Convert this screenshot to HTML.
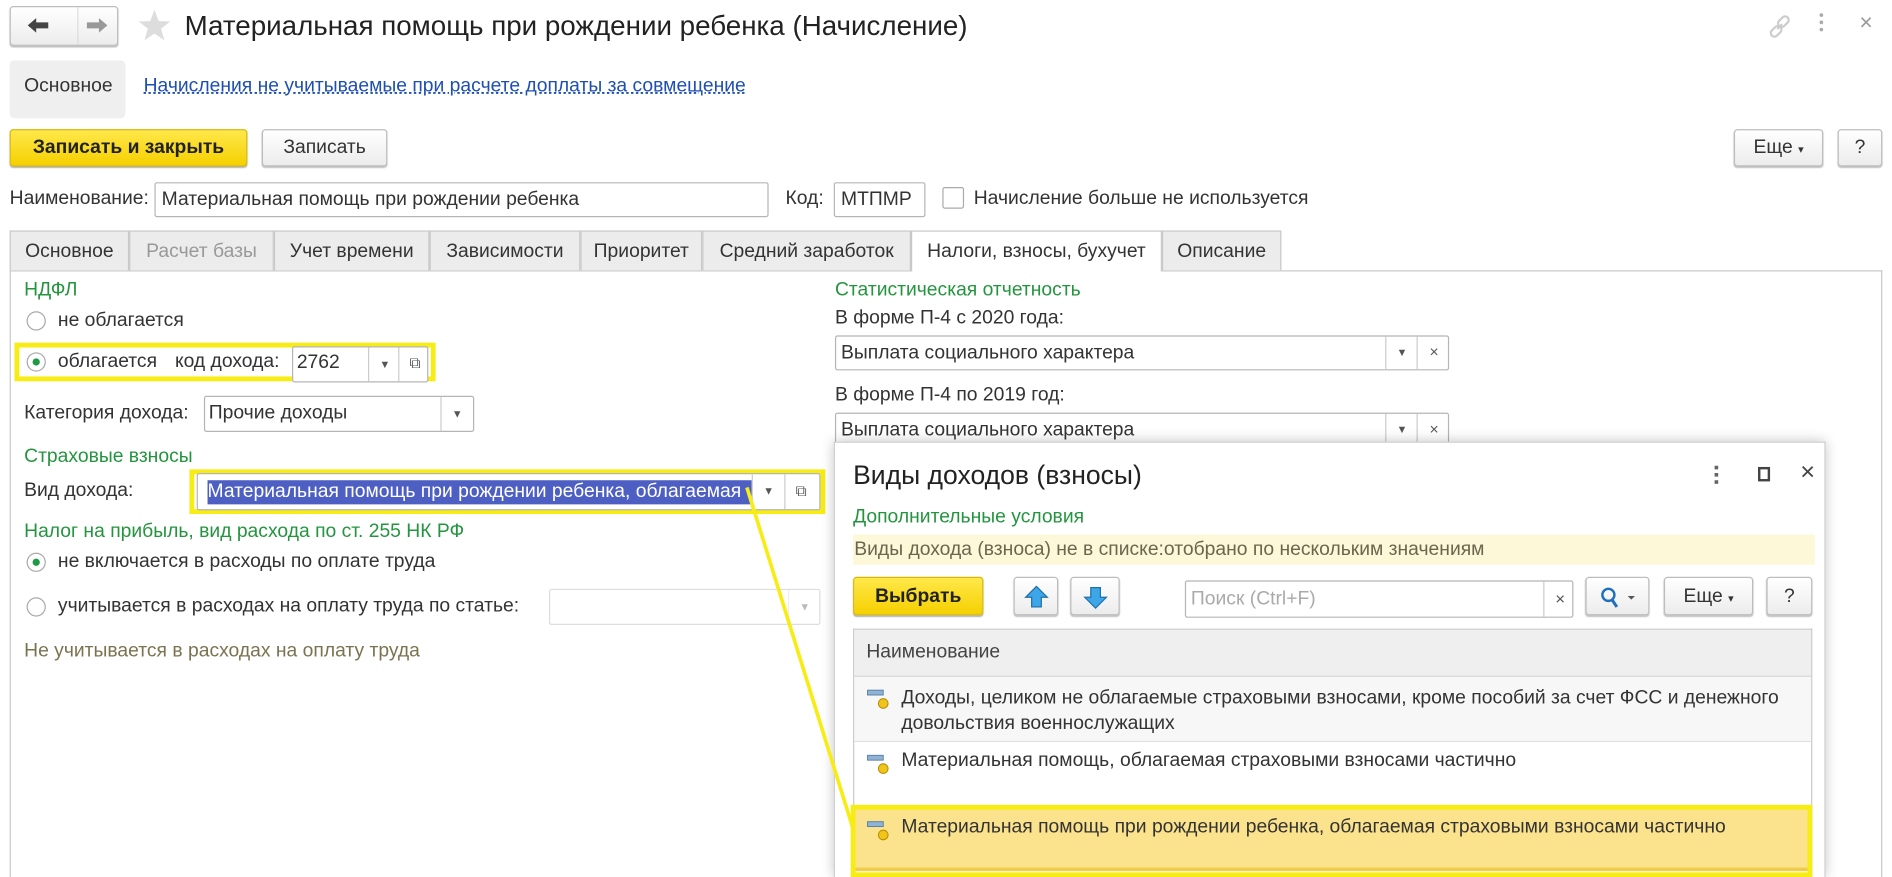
<!DOCTYPE html>
<html><head><meta charset="utf-8"><style>
html,body{margin:0;padding:0;background:#fff;overflow:hidden;width:1892px;height:877px}
#w{position:absolute;left:0;top:0;width:1568px;height:727px;overflow:hidden;transform:scale(1.2066);transform-origin:0 0;font-family:"Liberation Sans",sans-serif;font-size:16px;color:#333}
.a{position:absolute;white-space:nowrap}
.btn{position:absolute;box-sizing:border-box;border:1px solid #bdbdbd;border-radius:3px;background:linear-gradient(#fff,#ececec);box-shadow:0 1px 1px rgba(0,0,0,.25);text-align:center;color:#333}
.ybtn{position:absolute;box-sizing:border-box;border:1px solid #d8b800;border-radius:3px;background:linear-gradient(#ffe84a,#f5d000);box-shadow:0 1px 1px rgba(0,0,0,.3);text-align:center;font-weight:bold;color:#222}
.inp{position:absolute;box-sizing:border-box;border:1px solid #b5b5b5;border-radius:2px;background:#fff;padding-left:5px;color:#333}
.g{color:#24953f}
.tab{position:absolute;top:191px;height:33px;box-sizing:border-box;border:1px solid #c8c8c8;border-bottom:none;background:#ececec;text-align:center;line-height:33px}
.rad{position:absolute;width:16px;height:16px;border:1px solid #a9a9a9;border-radius:50%;box-sizing:border-box;background:#fff}
.rad.on::after{content:"";position:absolute;left:4px;top:4px;width:6px;height:6px;border-radius:50%;background:#1e9a45}
.dd{position:absolute;top:0;bottom:0;border-left:1px solid #ccc;width:26px;font-size:9px;text-align:center;color:#555}
.yb{position:absolute;box-sizing:border-box;border:4px solid #f7ec13}
.ic{position:absolute}
</style></head><body><div id="w">
<div class="btn" style="left:8px;top:5px;width:90px;height:33px;border-radius:3px"></div>
<div style="position:absolute;left:64px;top:6px;width:1px;height:31px;background:#ddd"></div>
<svg class="ic" style="left:22px;top:13px" width="20" height="16"><path d="M1 8 L8 2 L8 5.5 L18 5.5 L18 10.5 L8 10.5 L8 14 Z" fill="#444"/></svg>
<svg class="ic" style="left:70px;top:13px" width="20" height="16"><path d="M19 8 L12 2 L12 5.5 L2 5.5 L2 10.5 L12 10.5 L12 14 Z" fill="#999"/></svg>
<svg class="ic" style="left:114px;top:7px" width="28" height="28"><path d="M14 1 L17.5 10.5 L27 10.8 L19.5 16.8 L22.3 26.5 L14 20.8 L5.7 26.5 L8.5 16.8 L1 10.8 L10.5 10.5 Z" fill="#ddd"/></svg>
<div class="a" style="left:153px;top:8px;font-size:23px;color:#222">Материальная помощь при рождении ребенка (Начисление)</div>
<svg class="ic" style="left:1464px;top:11px" width="22" height="22"><g fill="none" stroke="#ccc" stroke-width="1.8"><path d="M9 13 L13 9"/><rect x="11" y="2" width="6" height="10" rx="3" transform="rotate(45 14 7)"/><rect x="5" y="10" width="6" height="10" rx="3" transform="rotate(45 8 15)"/></g></svg>
<div class="a" style="left:1508px;top:11px;width:4px"><div style="width:3px;height:3px;background:#aaa;margin-bottom:3px;border-radius:50%"></div><div style="width:3px;height:3px;background:#aaa;margin-bottom:3px;border-radius:50%"></div><div style="width:3px;height:3px;background:#aaa;border-radius:50%"></div></div>
<div class="a" style="left:1541px;top:9px;font-size:19px;color:#999">×</div>
<div style="position:absolute;left:8px;top:50px;width:96px;height:48px;background:#efefef;border-radius:4px"></div>
<div class="a" style="left:20px;top:63px;color:#333">Основное</div>
<div class="a" style="left:119px;top:63px;color:#1f4fb0;text-decoration:underline;text-decoration-style:dotted">Начисления не учитываемые при расчете доплаты за совмещение</div>
<div class="ybtn" style="left:8px;top:107px;width:197px;height:31px;line-height:30px">Записать и закрыть</div>
<div class="btn" style="left:217px;top:107px;width:104px;height:31px;line-height:30px">Записать</div>
<div class="btn" style="left:1437px;top:107px;width:74px;height:31px;line-height:30px">Еще <span style="font-size:9px">▾</span></div>
<div class="btn" style="left:1523px;top:107px;width:37px;height:31px;line-height:30px">?</div>
<div class="a" style="left:8px;top:156px">Наименование:</div>
<div class="inp" style="left:128px;top:151px;width:509px;height:29px;line-height:27px">Материальная помощь при рождении ребенка</div>
<div class="a" style="left:651px;top:156px">Код:</div>
<div class="inp" style="left:691px;top:151px;width:76px;height:29px;line-height:27px">МТПМР</div>
<div style="position:absolute;left:781px;top:155px;width:18px;height:18px;border:1px solid #aaa;border-radius:2px;box-sizing:border-box"></div>
<div class="a" style="left:807px;top:156px">Начисление больше не используется</div>
<div style="position:absolute;left:8px;top:224px;width:1552px;height:503px;border:1px solid #c8c8c8;border-bottom:none;box-sizing:border-box"></div>
<div class="tab" style="left:8px;width:99px">Основное</div>
<div class="tab" style="left:107px;width:120px;color:#999">Расчет базы</div>
<div class="tab" style="left:227px;width:129px">Учет времени</div>
<div class="tab" style="left:356px;width:125px">Зависимости</div>
<div class="tab" style="left:481px;width:101px">Приоритет</div>
<div class="tab" style="left:582px;width:173px">Средний заработок</div>
<div class="tab" style="left:755px;width:208px;background:#fff;height:34px">Налоги, взносы, бухучет</div>
<div class="tab" style="left:963px;width:99px">Описание</div>
<div class="a g" style="left:20px;top:232px">НДФЛ</div>
<div class="rad" style="left:22px;top:258px"></div>
<div class="a" style="left:48px;top:257px">не облагается</div>
<div class="yb" style="left:12px;top:284px;width:349px;height:32px"></div>
<div class="rad on" style="left:22px;top:292px"></div>
<div class="a" style="left:48px;top:291px">облагается</div>
<div class="a" style="left:145px;top:291px">код дохода:</div>
<div class="inp" style="left:242px;top:287px;width:113px;height:30px;line-height:26px;padding-left:3px">2762<div class="dd" style="left:62px;line-height:28px">▼</div><div class="dd" style="left:87px;line-height:26px;font-size:13px">⧉</div></div>
<div class="a" style="left:20px;top:334px">Категория дохода:</div>
<div class="inp" style="left:169px;top:328px;width:224px;height:30px;line-height:28px;padding-left:3px">Прочие доходы<div class="dd" style="left:195px;line-height:28px">▼</div></div>
<div class="a g" style="left:20px;top:370px">Страховые взносы</div>
<div class="a" style="left:20px;top:398px">Вид дохода:</div>
<div class="yb" style="left:157px;top:389px;width:527px;height:37px"></div>
<div class="inp" style="left:163px;top:392px;width:517px;height:31px;padding-left:7px;overflow:hidden"><span style="position:absolute;left:8px;top:5px;width:451px;overflow:hidden;background:#4d5fc2;color:#fff;padding:1px 0;line-height:18px">Материальная помощь при рождении ребенка, облагаемая</span><div class="dd" style="left:459px;line-height:29px">▼</div><div class="dd" style="left:486px;line-height:28px;font-size:13px">⧉</div></div>
<div class="a g" style="left:20px;top:432px">Налог на прибыль, вид расхода по ст. 255 НК РФ</div>
<div class="rad on" style="left:22px;top:458px"></div>
<div class="a" style="left:48px;top:457px">не включается в расходы по оплате труда</div>
<div class="rad" style="left:22px;top:495px"></div>
<div class="a" style="left:48px;top:494px">учитывается в расходах на оплату труда по статье:</div>
<div class="inp" style="left:455px;top:488px;width:225px;height:30px;border-color:#ddd"><div class="dd" style="left:197px;line-height:28px;color:#bbb;border-color:#eee">▼</div></div>
<div class="a" style="left:20px;top:531px;color:#7b7350">Не учитывается в расходах на оплату труда</div>
<div class="a g" style="left:692px;top:232px">Статистическая отчетность</div>
<div class="a" style="left:692px;top:255px">В форме П-4 с 2020 года:</div>
<div class="inp" style="left:692px;top:278px;width:509px;height:29px;line-height:27px;padding-left:4px">Выплата социального характера<div class="dd" style="left:455px;line-height:27px">▼</div><div class="dd" style="left:481px;line-height:26px;font-size:13px;width:27px">×</div></div>
<div class="a" style="left:692px;top:319px">В форме П-4 по 2019 год:</div>
<div class="inp" style="left:692px;top:342px;width:509px;height:29px;line-height:27px;padding-left:4px">Выплата социального характера<div class="dd" style="left:455px;line-height:27px">▼</div><div class="dd" style="left:481px;line-height:26px;font-size:13px;width:27px">×</div></div>
<div style="position:absolute;left:691px;top:366px;width:822px;height:361px;background:#fff;border:1px solid #cfcfcf;border-bottom:none;box-shadow:0 0 10px rgba(0,0,0,.25);box-sizing:border-box"></div>
<div class="a" style="left:707px;top:381px;font-size:22px;color:#222">Виды доходов (взносы)</div>
<div class="a" style="left:1421px;top:386px"><div style="width:3px;height:3px;background:#666;margin-bottom:3px"></div><div style="width:3px;height:3px;background:#666;margin-bottom:3px"></div><div style="width:3px;height:3px;background:#666"></div></div>
<div style="position:absolute;left:1457px;top:387px;width:10px;height:12px;border:2px solid #444;box-sizing:border-box"></div>
<div class="a" style="left:1492px;top:380px;font-size:21px;color:#444">×</div>
<div class="a g" style="left:707px;top:420px">Дополнительные условия</div>
<div style="position:absolute;left:707px;top:443px;width:797px;height:25px;background:#fdf8d8"></div>
<div class="a" style="left:708px;top:447px;color:#6a664f">Виды дохода (взноса) не в списке:отобрано по нескольким значениям</div>
<div class="ybtn" style="left:707px;top:478px;width:108px;height:32px;line-height:31px">Выбрать</div>
<div class="btn" style="left:840px;top:478px;width:37px;height:32px"><svg width="22" height="20" style="margin-top:6px"><path d="M11 1 L20 10 L15 10 L15 18 L7 18 L7 10 L2 10 Z" fill="#3ca6e8" stroke="#1f6fa8" stroke-width="1"/></svg></div>
<div class="btn" style="left:887px;top:478px;width:41px;height:32px"><svg width="22" height="20" style="margin-top:6px"><path d="M11 19 L20 10 L15 10 L15 2 L7 2 L7 10 L2 10 Z" fill="#3ca6e8" stroke="#1f6fa8" stroke-width="1"/></svg></div>
<div class="inp" style="left:982px;top:481px;width:322px;height:31px;line-height:29px;color:#aaa;padding-left:4px">Поиск (Ctrl+F)<div class="dd" style="left:296px;line-height:29px;font-size:14px;color:#555">×</div></div>
<div class="btn" style="left:1314px;top:478px;width:53px;height:32px"><svg width="36" height="20" style="margin-top:6px"><circle cx="10" cy="8" r="5" fill="none" stroke="#1f6fbf" stroke-width="2"/><path d="M13 12 L17 18" stroke="#1f6fbf" stroke-width="2.5"/><path d="M26 9 L32 9 L29 12 Z" fill="#555"/></svg></div>
<div class="btn" style="left:1379px;top:478px;width:74px;height:32px;line-height:31px">Еще <span style="font-size:9px">▾</span></div>
<div class="btn" style="left:1464px;top:478px;width:38px;height:32px;line-height:31px">?</div>
<div style="position:absolute;left:707px;top:521px;width:795px;height:206px;border:1px solid #c8c8c8;border-bottom:none;box-sizing:border-box"></div>
<div style="position:absolute;left:708px;top:522px;width:793px;height:38px;background:#efefef;border-bottom:1px solid #d5d5d5"></div>
<div class="a" style="left:718px;top:532px;color:#444">Наименование</div>
<div style="position:absolute;left:708px;top:561px;width:793px;height:53px;background:#f7f7f7;border-bottom:1px solid #e2e2e2"></div>
<div class="a" style="left:747px;top:568px;line-height:21px;color:#333">Доходы, целиком не облагаемые страховыми взносами, кроме пособий за счет ФСС и денежного<br>довольствия военнослужащих</div>
<div class="a" style="left:747px;top:622px;color:#333">Материальная помощь, облагаемая страховыми взносами частично</div>
<div style="position:absolute;left:708px;top:670px;width:793px;height:52px;background:#fbe28c;border-bottom:3px solid #f1cc45;box-sizing:border-box"></div>
<div class="yb" style="left:705px;top:667px;width:797px;height:60px;border-width:4px"></div>
<div class="a" style="left:747px;top:677px;color:#333">Материальная помощь при рождении ребенка, облагаемая страховыми взносами частично</div>
<svg class="ic" style="left:718px;top:570px" width="20" height="20"><rect x="1" y="2" width="13" height="4" fill="#8fb3d6" stroke="#5b7fa6" stroke-width=".8"/><circle cx="14" cy="13" r="4" fill="#f0c419" stroke="#b58c00" stroke-width=".8"/></svg>
<svg class="ic" style="left:718px;top:624px" width="20" height="20"><rect x="1" y="2" width="13" height="4" fill="#8fb3d6" stroke="#5b7fa6" stroke-width=".8"/><circle cx="14" cy="13" r="4" fill="#f0c419" stroke="#b58c00" stroke-width=".8"/></svg>
<svg class="ic" style="left:718px;top:679px" width="20" height="20"><rect x="1" y="2" width="13" height="4" fill="#8fb3d6" stroke="#5b7fa6" stroke-width=".8"/><circle cx="14" cy="13" r="4" fill="#f0c419" stroke="#b58c00" stroke-width=".8"/></svg>
<svg class="ic" style="left:0;top:0" width="1568" height="727"><line x1="619" y1="404" x2="708" y2="690" stroke="#f7ec13" stroke-width="3"/></svg>
</div></body></html>
